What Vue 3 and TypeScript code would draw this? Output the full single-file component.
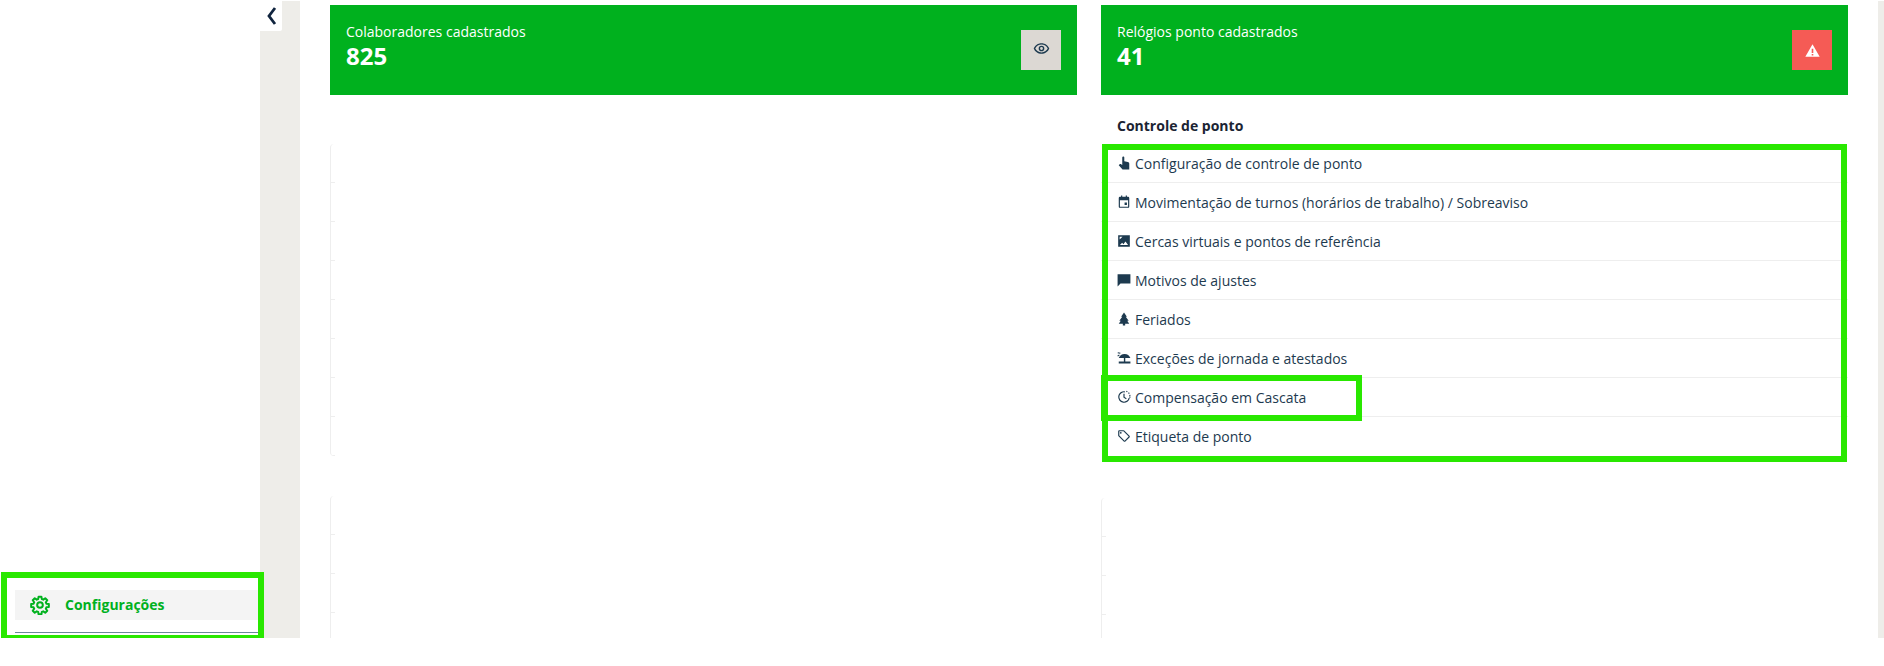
<script setup lang="ts">
interface Row { label: string; path: string; fillRule?: 'evenodd' }
const rows: Row[] = [
  { label: 'Configuração de controle de ponto', path: 'M9 2.500C9 1.500 9.800 1 10.700 1S12.500 1.500 12.500 2.500V9l6 1.300c1.500.3 2.500 1.300 2.500 2.900V23H9.500L3 15.800l1.500-1.500c.7-.7 1.800-.8 2.500-.3L9 15.300z' },
  { label: 'Movimentação de turnos (horários de trabalho) / Sobreaviso', path: 'M7 1h2v2h6V1h2v2h2a2 2 0 0 1 2 2v15a2 2 0 0 1-2 2H5a2 2 0 0 1-2-2V5a2 2 0 0 1 2-2h2zM5 9v11h14V9zm8 4h4v4h-4z', fillRule: 'evenodd' },
  { label: 'Cercas virtuais e pontos de referência', path: 'M2 2h20v20H2zm3 17h14l-4.500-6-3.500 4.500-2.200-2.700zM4.500 4.500v5l5-5z', fillRule: 'evenodd' },
  { label: 'Motivos de ajustes', path: 'M1 2h22v16H6l-5 5z' },
  { label: 'Feriados', path: 'M12 1l5 7h-2l5 7h-2.500L21 20h-7v3h-4v-3H3l3.500-5H4l5-7H7z' },
  { label: 'Exceções de jornada e atestados', path: 'M13 5c4.800 0 8.500 2.700 10 7H3c1.500-4.300 5.200-7 10-7zM11.800 12h2.400v6h-2.400zM3 18h20v3.500H3zM1.500 2l4.500.8-.5 2L1 4zM.5 8l3-2.200 1.200 1.600-3 2.200z' },
  { label: 'Compensação em Cascata', path: 'M13.500 2.100A10 10 0 1 0 21.900 13.500H19.900A8 8 0 1 1 13.500 4.100zM11 6.500h2V12l3.500 2.100-1 1.700L11 13zM15.500 2.800l1-1.700 1.700 1-1 1.700zM19 5.200l1.500-1.300 1.300 1.500-1.500 1.300zM20.800 8.700l1.900-.6.600 1.900-1.900.6zM21.100 11.200h2v2h-2z' },
  { label: 'Etiqueta de ponto', path: 'M21.400 11.600l-9-9A2 2 0 0 0 11 2H4a2 2 0 0 0-2 2v7c0 .6.200 1.100.6 1.400l9 9c.4.400.9.600 1.400.600s1.100-.2 1.400-.6l7-7c.4-.4.600-.9.600-1.400s-.2-1.100-.6-1.400zM13 20L4 11V4h7l9 9zM6.500 5A1.500 1.500 0 1 0 6.500 8 1.500 1.500 0 0 0 6.500 5z', fillRule: 'evenodd' },
]
const leftTicks = Array.from({ length: 8 }, (_, i) => i)
const lowerTicks = Array.from({ length: 4 }, (_, i) => i)
</script>

<template>
  <div class="shell">
    <aside class="sidebar">
      <div class="collapse-tab">
        <svg width="11" height="18" viewBox="0 0 11 18" fill="none" stroke="#10243e" stroke-width="2.800" stroke-linejoin="miter">
          <path d="M9 1 3 9l6 8" />
        </svg>
      </div>
      <div class="side-foot">
        <div class="side-item">
          <svg width="20" height="20" viewBox="0 0 24 24" fill="none" stroke="#00b11e" stroke-width="2.400" stroke-linejoin="round">
            <path d="M10.300 2h3.400l.5 2.900 1.700.7 2.400-1.700 2.400 2.400-1.700 2.400.7 1.700 2.900.5v3.400l-2.900.5-.7 1.700 1.700 2.400-2.400 2.400-2.400-1.700-1.700.7-.5 2.900h-3.400l-.5-2.900-1.700-.7-2.400 1.700-2.400-2.400 1.700-2.400-.7-1.700-2.900-.5v-3.400l2.900-.5.7-1.700-1.700-2.400 2.400-2.400 2.400 1.700 1.700-.7z" />
            <circle cx="12" cy="12" r="3.400" />
          </svg>
          <span>Configurações</span>
        </div>
        <div class="side-rule"></div>
      </div>
      <div class="mark mark-side"></div>
    </aside>

    <div class="gutter"></div>

    <main class="main">
      <div class="grid">
        <section class="col">
          <div class="card">
            <div class="card-text">
              <span class="card-label">Colaboradores cadastrados</span>
              <strong class="card-value">825</strong>
            </div>
            <div class="card-btn neutral">
              <svg class="eye" width="17" height="17" viewBox="0 0 24 24" fill="#1d3a4f">
                <path fill-rule="evenodd" d="M12 4.500C7 4.500 2.700 7.600 1 12c1.700 4.400 6 7.500 11 7.500s9.300-3.100 11-7.500c-1.700-4.400-6-7.500-11-7.500zM3.200 12C4.800 8.700 8.200 6.500 12 6.500s7.200 2.200 8.800 5.500c-1.600 3.300-5 5.500-8.800 5.500S4.800 15.300 3.200 12zM12 8a4 4 0 1 0 0 8 4 4 0 0 0 0-8zm0 2a2 2 0 1 1 0 4 2 2 0 0 1 0-4z" />
              </svg>
            </div>
          </div>
          <div class="ghost first">
            <div v-for="t in leftTicks" :key="t" class="ghost-row"></div>
          </div>
          <div class="ghost second">
            <div v-for="t in lowerTicks" :key="t" class="ghost-row"></div>
          </div>
        </section>

        <section class="col">
          <div class="card">
            <div class="card-text">
              <span class="card-label">Relógios ponto cadastrados</span>
              <strong class="card-value">41</strong>
            </div>
            <div class="card-btn danger">
              <svg width="15" height="15" viewBox="0 0 24 24" fill="#fff">
                <path fill-rule="evenodd" d="M12 2 .5 22h23zM10.700 9h2.600v7h-2.600zm0 8.500h2.600V20h-2.600z" />
              </svg>
            </div>
          </div>
          <h2 class="list-title">Controle de ponto</h2>
          <ul class="list">
            <li v-for="row in rows" :key="row.label" class="list-row">
              <svg class="row-icon" width="14" height="14" viewBox="0 0 24 24" fill="#1d3a4f">
                <path :fill-rule="row.fillRule" :d="row.path" />
              </svg>
              <span>{{ row.label }}</span>
            </li>
            <li class="mark mark-list"></li>
            <li class="mark mark-row"></li>
          </ul>
          <div class="ghost third">
            <div v-for="t in lowerTicks" :key="t" class="ghost-row"></div>
          </div>
        </section>
      </div>
    </main>

    <div class="edge"></div>
  </div>
</template>

<style>
html, body { margin: 0; background: #fff; }
</style>

<style scoped>
.shell {
  display: flex;
  height: 637px;
  margin-top: 1px;
  font-family: "Open Sans", "Noto Sans", sans-serif;
  color: #1d3a4f;
  background: #fff;
}
.sidebar {
  position: relative;
  flex: 0 0 260px;
  display: flex;
  flex-direction: column;
  justify-content: flex-end;
  background: #fff;
}
.collapse-tab {
  position: absolute;
  top: 0;
  left: 260px;
  z-index: 2;
  width: 22px;
  height: 30px;
  display: flex;
  align-items: center;
  justify-content: center;
  background: #fff;
  border-bottom-right-radius: 2px;
}
.side-foot { padding: 0 0 5px 15px; }
.side-item {
  display: flex;
  align-items: center;
  gap: 15px;
  height: 30px;
  padding: 0 0 1px 15px;
  box-sizing: border-box;
  background: #f4f4f4;
  color: #00b11e;
  font-size: 14px;
  font-weight: 700;
}
.side-rule {
  height: 1px;
  margin-top: 12px;
  background: #6a8a9a;
}
.gutter {
  flex: 0 0 40px;
  background: #eeede9;
}
.main {
  flex: 1;
  min-width: 0;
  padding: 4px 30px 0;
  overflow: hidden;
}
.grid {
  display: grid;
  grid-template-columns: 747px 747px;
  column-gap: 24px;
}
.col { min-width: 0; }
.card {
  display: flex;
  align-items: center;
  justify-content: space-between;
  height: 90px;
  padding: 0 16px;
  box-sizing: border-box;
  background: #00b11e;
  color: #fff;
}
.card-text {
  display: flex;
  flex-direction: column;
  margin-top: -8px;
}
.card-label { font-size: 14px; line-height: 20px; }
.card-value { font-size: 24px; line-height: 28px; font-weight: 700; }
.card-btn {
  flex: none;
  display: flex;
  align-items: center;
  justify-content: center;
  width: 40px;
  height: 40px;
}
.eye { margin-bottom: 4px; }
.neutral { background: #dcd8d3; }
.danger { background: #f55b55; }
.list-title {
  margin: 21px 0 0;
  padding-left: 16px;
  font-size: 14px;
  line-height: 20px;
  font-weight: 700;
  color: #1b2433;
}
.list {
  position: relative;
  list-style: none;
  margin: 8px 0 0;
  padding: 0;
}
.list-row {
  display: flex;
  align-items: center;
  gap: 4px;
  height: 39px;
  padding-left: 16px;
  box-sizing: border-box;
  border-bottom: 1px solid #eee;
  font-size: 14px;
}
.list-row:nth-child(8) { border-bottom-color: transparent; }
.row-icon { flex: none; }
.mark {
  position: absolute;
  box-sizing: border-box;
  border: 6px solid #29e800;
  pointer-events: none;
}
.mark-side { left: 1px; bottom: -3px; width: 263px; height: 69px; z-index: 3; }
.mark-list { left: 1px; top: 0; width: 745px; height: 318px; }
.mark-row { left: 0; top: 231px; width: 261px; height: 46px; }
.ghost {
  border-left: 1px solid #eee;
  border-radius: 4px 0 0 4px;
  overflow: hidden;
}
.ghost-row {
  height: 39px;
  box-sizing: border-box;
  position: relative;
}
.ghost-row::after {
  content: "";
  position: absolute;
  left: 0;
  bottom: 0;
  width: 4px;
  height: 1px;
  background: #eee;
}
.first { margin-top: 49px; }
.second { margin-top: 40px; }
.third { margin-top: 42px; }
.edge {
  flex: 0 0 6px;
  background: #eeede9;
}
</style>
